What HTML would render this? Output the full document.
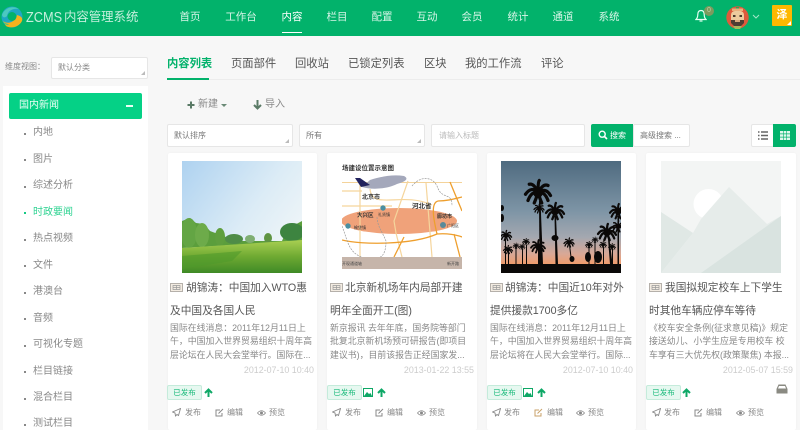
<!DOCTYPE html>
<html lang="zh"><head><meta charset="utf-8"><title>ZCMS</title>
<style>
html,body{margin:0;padding:0;width:800px;height:430px;overflow:hidden}
body{position:relative;background:#f7f7f7;font-family:"Liberation Sans","Noto Sans CJK SC",sans-serif;color:#555}
#w{position:absolute;left:0;top:0;width:800px;height:430px;overflow:hidden;filter:blur(.3px)}
.a{position:absolute;white-space:nowrap}
.hd{left:0;top:0;width:800px;height:36px;background:#02b26b}
.nav{top:9px;font-size:10.5px;line-height:16px;color:#d8f5e8;transform:translateX(-50%)}
.box{background:#fff;border:1px solid #e6e6e6;border-radius:2px;box-sizing:border-box}
.si{left:33px;font-size:10px;line-height:14px;color:#888;margin-top:1px}
.dot{left:24px;width:1.5px;height:1.5px;background:#888}
.tab{top:56px;font-size:11.3px;line-height:16px;color:#555}
.tri{width:0;height:0;border-left:4px solid transparent;border-bottom:4px solid #bbb}
.card{top:153px;height:277px;background:#fff;border-radius:2px;box-shadow:0 0 2px rgba(0,0,0,.04)}
.t{font-size:10.7px;line-height:14px;color:#555}
.d{font-size:8.9px;line-height:13.3px;color:#888;white-space:nowrap}
.dt{font-size:8.9px;line-height:12px;color:#ccc;text-align:right}
.tag{top:385px;width:35px;height:15px;box-sizing:border-box;background:#e6f8f0;border:1px solid #c5ebdb;border-radius:2px;color:#16b978;font-size:7.5px;line-height:13px;text-align:center}
.ac{top:407px;font-size:8px;line-height:12px;color:#888}
.sm{font-size:8px;line-height:12px}
svg{position:absolute;display:block}
</style></head><body><div id="w">

<div class="a hd"></div>
<svg style="left:1px;top:6px" width="22" height="22" viewBox="0 0 22 22"><circle cx="11" cy="11" r="10.5" fill="#1fa7c4"/><path d="M1 9C3 2 12-1 18 3 13 2 7 4 6 10 4 12 2 12 1 9Z" fill="#4cc9c0"/><path d="M2 15C7 19 14 16 16 9 20 10 22 12 21 15 18 21 10 23 5 20Z" fill="#f5b21d"/><circle cx="11" cy="10.5" r="4.5" fill="#02b26b"/><path d="M1 14C3 17 5 18 8 18 6 20 3 18 1 14Z" fill="#17c9a4"/></svg>
<div class="a" style="left:26px;top:8px;font-size:15px;line-height:20px;color:#c5efdd;transform:scaleX(.85);transform-origin:left">ZCMS</div>
<div class="a" style="left:64px;top:9px;font-size:12.4px;line-height:17px;color:#c5efdd">内容管理系统</div>

<div class="a nav" style="left:190px">首页</div>
<div class="a nav" style="left:241px">工作台</div>
<div class="a nav" style="left:292px;color:#fff">内容</div>
<div class="a" style="left:282px;top:32px;width:20px;height:1px;background:#fff"></div>
<div class="a nav" style="left:337px">栏目</div>
<div class="a nav" style="left:382px">配置</div>
<div class="a nav" style="left:427px">互动</div>
<div class="a nav" style="left:472px">会员</div>
<div class="a nav" style="left:518px">统计</div>
<div class="a nav" style="left:563px">通道</div>
<div class="a nav" style="left:609px">系统</div>

<svg style="left:695px;top:9px" width="12" height="14" viewBox="0 0 12 14"><path d="M6 1.500C3.500 1.500 2.800 3.500 2.800 5.500 2.800 8 2 9.500 1 10.500H11C10 9.500 9.200 8 9.200 5.500 9.200 3.500 8.500 1.500 6 1.500Z" fill="none" stroke="#e3fff2" stroke-width="1.200"/><path d="M4.500 12H7.500" stroke="#e3fff2" stroke-width="1.200"/></svg>
<div class="a" style="left:704px;top:6px;width:10px;height:10px;border-radius:5px;background:#7d9a5e;color:#bcd1a5;font-size:7px;line-height:10px;text-align:center">0</div>
<svg style="left:726px;top:6px" width="23" height="23" viewBox="0 0 23 23"><circle cx="11.500" cy="11.500" r="11.200" fill="#dd5a3c"/><rect x="5" y="5" width="13" height="13" rx="4" fill="#eccb9d"/><rect x="10" y="1" width="3" height="3" fill="#3d9c52"/><rect x="6" y="2.500" width="11" height="2.500" fill="#e9b07c"/><rect x="7" y="9" width="2.500" height="2" fill="#4a3a2c"/><rect x="13.500" y="9" width="2.500" height="2" fill="#4a3a2c"/><path d="M5 14H18V17L15 20H8L5 17Z" fill="#4e3d33"/><rect x="9" y="14" width="5" height="2" fill="#d9a87d"/><path d="M7 20H16L14 23H9Z" fill="#a8b85c"/></svg>
<svg style="left:752px;top:14px" width="8" height="6" viewBox="0 0 8 6"><path d="M1 1L4 4 7 1" fill="none" stroke="#a5e6c9" stroke-width="1"/></svg>
<div class="a" style="left:772px;top:5px;width:20px;height:21px;background:#ffb800;color:#fff;font-size:11px;line-height:21px;text-align:center;font-weight:bold;border-radius:1px">泽</div>
<div class="a" style="left:787px;top:21px;width:0;height:0;border-left:4px solid transparent;border-bottom:4px solid #fff"></div>

<div class="a sm" style="left:5px;top:61px;color:#888">维度视图：</div>
<div class="a box" style="left:51px;top:57px;width:97px;height:22px"></div>
<div class="a sm" style="left:58px;top:62px;color:#888">默认分类</div>
<div class="a tri" style="left:141px;top:71px"></div>

<div class="a" style="left:3px;top:86px;width:145px;height:344px;background:#fff"></div>
<div class="a" style="left:9px;top:93px;width:133px;height:26px;background:#05d186;border-radius:2px"></div>
<div class="a" style="left:19px;top:99px;font-size:10px;line-height:14px;color:#eafff5">国内新闻</div>
<div class="a" style="left:126px;top:105px;width:7px;height:2px;background:#eafff5"></div>

<div class="a dot" style="top:133px"></div><div class="a si" style="top:125px">内地</div>
<div class="a dot" style="top:159px"></div><div class="a si" style="top:152px">图片</div>
<div class="a dot" style="top:186px"></div><div class="a si" style="top:178px">综述分析</div>
<div class="a dot" style="top:212px;background:#16c985"></div><div class="a si" style="top:205px;color:#2fd392">时政要闻</div>
<div class="a dot" style="top:239px"></div><div class="a si" style="top:231px">热点视频</div>
<div class="a dot" style="top:265px"></div><div class="a si" style="top:258px">文件</div>
<div class="a dot" style="top:292px"></div><div class="a si" style="top:284px">港澳台</div>
<div class="a dot" style="top:318px"></div><div class="a si" style="top:311px">音频</div>
<div class="a dot" style="top:345px"></div><div class="a si" style="top:337px">可视化专题</div>
<div class="a dot" style="top:371px"></div><div class="a si" style="top:364px">栏目链接</div>
<div class="a dot" style="top:398px"></div><div class="a si" style="top:390px">混合栏目</div>
<div class="a dot" style="top:424px"></div><div class="a si" style="top:416px">测试栏目</div>

<div class="a" style="left:167px;top:79px;width:633px;height:1px;background:#ececec"></div>
<div class="a" style="left:167px;top:78px;width:42px;height:2px;background:#02b26b"></div>
<div class="a tab" style="left:167px;color:#02b26b;font-weight:bold">内容列表</div>
<div class="a tab" style="left:231px">页面部件</div>
<div class="a tab" style="left:295px">回收站</div>
<div class="a tab" style="left:348px">已锁定列表</div>
<div class="a tab" style="left:424px">区块</div>
<div class="a tab" style="left:465px">我的工作流</div>
<div class="a tab" style="left:541px">评论</div>

<svg style="left:187px;top:101px" width="8" height="8" viewBox="0 0 8 8"><path d="M4 .5V7.500M.5 4H7.500" stroke="#5a7a66" stroke-width="2"/></svg>
<div class="a" style="left:198px;top:98px;font-size:10px;line-height:14px;color:#888">新建</div>
<div class="a" style="left:221px;top:104px;width:0;height:0;border-left:3px solid transparent;border-right:3px solid transparent;border-top:3px solid #6a8a76"></div>
<svg style="left:253px;top:100px" width="9" height="10" viewBox="0 0 9 10"><path d="M4.500 0V8M1 5L4.500 8.500 8 5" fill="none" stroke="#5a7a66" stroke-width="2"/></svg>
<div class="a" style="left:265px;top:98px;font-size:10px;line-height:14px;color:#888">导入</div>

<div class="a box" style="left:167px;top:124px;width:126px;height:23px"></div>
<div class="a sm" style="left:174px;top:130px;color:#777">默认排序</div>
<div class="a tri" style="left:285px;top:139px"></div>
<div class="a box" style="left:299px;top:124px;width:126px;height:23px"></div>
<div class="a sm" style="left:306px;top:130px;color:#777">所有</div>
<div class="a tri" style="left:417px;top:139px"></div>
<div class="a box" style="left:431px;top:124px;width:154px;height:23px"></div>
<div class="a sm" style="left:439px;top:130px;color:#bbb">请输入标题</div>
<div class="a" style="left:591px;top:124px;width:42px;height:23px;background:#02b26b;border-radius:2px 0 0 2px"></div>
<svg style="left:598px;top:130px" width="10" height="10" viewBox="0 0 10 10"><circle cx="4.200" cy="4.200" r="3" fill="none" stroke="#fff" stroke-width="1.400"/><path d="M6.500 6.500L9 9" stroke="#fff" stroke-width="1.600"/></svg>
<div class="a sm" style="left:610px;top:130px;color:#fff">搜索</div>
<div class="a box" style="left:633px;top:124px;width:57px;height:23px"></div>
<div class="a sm" style="left:640px;top:130px;color:#777">高级搜索 ...</div>
<div class="a box" style="left:751px;top:124px;width:23px;height:23px"></div>
<svg style="left:758px;top:131px" width="10" height="9" viewBox="0 0 10 9"><path d="M0 1H1.500M3 1H10M0 4.500H1.500M3 4.500H10M0 8H1.500M3 8H10" stroke="#666" stroke-width="1.400"/></svg>
<div class="a" style="left:773px;top:124px;width:23px;height:23px;background:#02b26b;border-radius:0 2px 2px 0"></div>
<svg style="left:780px;top:131px" width="10" height="9" viewBox="0 0 10 9"><path d="M0 0H10V2.500H0ZM0 3.300H10V5.700H0ZM0 6.500H10V9H0Z" fill="#dff7ec"/><path d="M3.300 0V9M6.700 0V9" stroke="#02b26b" stroke-width=".6"/></svg>

<!-- cards -->
<div class="a card" style="left:168px;width:149px"></div>
<div class="a card" style="left:327px;width:150px"></div>
<div class="a card" style="left:487px;width:149px"></div>
<div class="a card" style="left:646px;width:150px"></div>

<!-- image 1 -->
<svg style="left:182px;top:161px" width="120" height="112" viewBox="0 0 120 112">
<defs><linearGradient id="s1" x1="0" y1="0" x2="1" y2=".7"><stop offset="0" stop-color="#aed2f0"/><stop offset=".6" stop-color="#dcecf6"/><stop offset="1" stop-color="#f1f6f8"/></linearGradient>
<linearGradient id="g1" x1="0" y1="0" x2="0" y2="1"><stop offset="0" stop-color="#a9cf52"/><stop offset=".5" stop-color="#6faa32"/><stop offset="1" stop-color="#3f8a26"/></linearGradient></defs>
<rect width="120" height="112" fill="url(#s1)"/>
<path d="M0 87V60L8 57 14 62 22 63 28 70 36 73 44 76 50 80H60L76 80H100L105 68 120 60V80Z" fill="#5b9e3c"/>
<ellipse cx="7" cy="72" rx="8" ry="15" fill="#63a544"/><ellipse cx="20" cy="74" rx="7" ry="12" fill="#6dab4a"/><ellipse cx="38" cy="76" rx="5" ry="9" fill="#5f9f3e"/><ellipse cx="52" cy="78" rx="9" ry="5" fill="#4f8c47"/><ellipse cx="68" cy="78" rx="5" ry="4" fill="#7fae72"/><ellipse cx="86" cy="77" rx="4" ry="5" fill="#5f9442"/><ellipse cx="110" cy="71" rx="12" ry="9" fill="#3d8440"/>
<path d="M0 87L120 79V112H0Z" fill="url(#g1)"/><path d="M0 95L60 90 50 100 0 108Z" fill="#4f9a2b" opacity=".6"/>
</svg>

<!-- image 2 -->
<svg style="left:342px;top:161px" width="120" height="112" viewBox="0 0 120 112">
<rect width="120" height="112" fill="#fff"/>
<ellipse cx="57" cy="60" rx="58" ry="13" fill="#f0a27a"/>
<rect x="0" y="21" width="120" height="1" fill="#f4d39a"/>
<path d="M18 22V96M84 22L90 96M0 45H50M66 20L52 60 54 72 60 96M28 28C30 50 60 30 90 44M0 30H20" fill="none" stroke="#f5d59c" stroke-width="1.200"/>
<path d="M0 79C20 84 70 84 95 73 105 72 115 74 120 76M52 96L62 76M96 40C88 42 92 60 95 73M96 40C105 40 112 38 120 36M108 21L120 50M112 73L118 96" fill="none" stroke="#ee9f2e" stroke-width="1.300"/>
<path d="M0 65C6 80 6 92 22 97 38 100 44 96 44 80 40 70 35 65 35 55M70 25C78 15 90 15 95 25 100 40 110 30 110 45" fill="none" stroke="#999" stroke-width=".7" stroke-dasharray="2 1"/>
<circle cx="41" cy="47" r="2.700" fill="#4b8fa0"/><circle cx="6" cy="65" r="2.700" fill="#4b8fa0"/><circle cx="101" cy="64" r="3" fill="#5a8a9a"/>
<g transform="translate(0,13)"><path d="M20 13C30 16 45 15 55 10 66 7 66 4 62 2 50 0 38 3 28 6Z" fill="#a4a8bb"/><path d="M13 4L19 13 28 11 18 4Z" fill="#22235e"/></g>
<rect x="0" y="96" width="120" height="12" fill="#c6b5aa"/>
<text x="0" y="9" font-size="6.500" font-weight="bold" fill="#333">场建设位置示意图</text>
<text x="20" y="38" font-size="6" font-weight="bold" fill="#333">北京市</text>
<text x="70" y="47" font-size="6.500" font-weight="bold" fill="#333">河北省</text>
<text x="15" y="56" font-size="5.500" font-weight="bold" fill="#333">大兴区</text>
<text x="36" y="55" font-size="4" fill="#333">礼贤镇</text>
<text x="12" y="68" font-size="4" fill="#333">榆垡镇</text>
<text x="95" y="57" font-size="5" font-weight="bold" fill="#333">廊坊市</text>
<text x="105" y="66" font-size="4" fill="#333">广阳区</text>
<text x="0" y="104" font-size="4" fill="#444">开现通道轴</text><text x="105" y="104" font-size="4" fill="#444">新开路</text>
</svg>

<!-- image 3 -->
<svg style="left:501px;top:161px" width="120" height="112" viewBox="0 0 120 112">
<defs><linearGradient id="s3" x1="0" y1="0" x2="0" y2="1"><stop offset="0" stop-color="#4f6b80"/><stop offset=".45" stop-color="#7e95a6"/><stop offset=".68" stop-color="#a4a8b0"/><stop offset=".83" stop-color="#d9a896"/><stop offset=".92" stop-color="#ef9c6d"/></linearGradient>
<g id="p" fill="none" stroke="#0b0908" stroke-width="2.600" stroke-linecap="round"><path d="M0 0Q-5-6-10 1M0 0Q-3-8-7-7M0 0Q0-9 1-10M0 0Q4-8 8-6M0 0Q6-5 10 2M0 0Q-5-2-8 6M0 0Q5-2 8 6M0 0Q-1 3-3 8M0 0Q1 3 3 8"/><circle r="2.500" fill="#0b0908"/></g></defs>
<rect width="120" height="112" fill="url(#s3)"/>
<g fill="#0b0908"><rect x="0" y="103" width="120" height="9"/>
<path d="M38 40H39.500L42 103H38.500Z"/><path d="M53.500 55H55L57 103H54.500Z"/><rect x="37" y="88" width="2" height="15"/><path d="M107 78H108.500L111.500 103H109Z"/><path d="M68 84H69L71 100H70Z"/><rect x="116.500" y="55" width="1.500" height="48"/>
<rect x="4" y="78" width="1" height="25"/><rect x="7" y="91" width="1" height="12"/><rect x="14.500" y="86" width="1" height="17"/><rect x="21" y="88" width="1" height="15"/><rect x="25" y="84" width="1" height="19"/><rect x="93.500" y="81" width="1" height="22"/><rect x="87.500" y="86" width="1" height="17"/><rect x="102" y="86" width="1" height="17"/><rect x="111" y="88" width="1" height="15"/>
<ellipse cx="97" cy="96" rx="4" ry="6"/><ellipse cx="87" cy="96" rx="3" ry="5"/><ellipse cx="71" cy="98" rx="2.500" ry="3"/><ellipse cx="54" cy="77" rx="3.500" ry="3"/><ellipse cx="1" cy="47" rx="2" ry="3"/><ellipse cx="1" cy="57" rx="2" ry="4"/></g>
<use href="#p" transform="translate(37,32) scale(1.250)"/><use href="#p" transform="translate(38,48) scale(.5)"/>
<use href="#p" transform="translate(54,51) scale(.9)"/>
<use href="#p" transform="translate(37,86) scale(.7)"/>
<use href="#p" transform="translate(106,72) scale(.9)"/>
<use href="#p" transform="translate(117,51) scale(.8)"/><use href="#p" transform="translate(117,66) scale(.6)"/>
<use href="#p" transform="translate(68,82) scale(.5)"/>
<use href="#p" transform="translate(94,79) scale(.3)"/><use href="#p" transform="translate(88,84) scale(.35)"/><use href="#p" transform="translate(102,84) scale(.35)"/><use href="#p" transform="translate(111,86) scale(.35)"/>
<use href="#p" transform="translate(5,75) scale(.55)"/><use href="#p" transform="translate(7,89) scale(.45)"/><use href="#p" transform="translate(15,85) scale(.3)"/><use href="#p" transform="translate(21,86) scale(.3)"/><use href="#p" transform="translate(25,81) scale(.35)"/>
</svg>

<!-- image 4 -->
<svg style="left:661px;top:161px" width="120" height="112" viewBox="0 0 120 112">
<rect width="120" height="112" fill="#f3f5f4"/>
<circle cx="47.500" cy="43" r="15" fill="#fff"/>
<path d="M0 51L32 72 0 112Z" fill="#e0e8e5"/>
<path d="M68 26L106 63 120 55V112H0L32 72 40 58Z" fill="#e6ecea"/>
<path d="M40 112L120 55V112Z" fill="#d9e3e0"/>
</svg>

<!-- card 1 text -->
<svg style="left:170px;top:283px" width="13" height="9" viewBox="0 0 13 9"><rect x=".5" y=".5" width="12" height="8" fill="#f3ece2" stroke="#b5b0aa"/><path d="M3 2.500H10V6.500H3ZM6.500 2.500V6.500M3 4.500H10" fill="none" stroke="#999" stroke-width=".7"/></svg>
<div class="a t" style="left:186px;top:281px">胡锦涛：中国加入WTO惠</div>
<div class="a t" style="left:170px;top:304px">及中国及各国人民</div>
<div class="a d" style="left:170px;top:322px">国际在线消息：2011年12月11日上<br>午，中国加入世界贸易组织十周年高<br>层论坛在人民大会堂举行。国际在...</div>
<div class="a dt" style="left:214px;width:100px;top:364px">2012-07-10 10:40</div>
<div class="a tag" style="left:167px">已发布</div>
<svg style="left:204px;top:388px" width="9" height="9" viewBox="0 0 9 9"><path d="M4.500 9V2M1 5L4.500 1.500 8 5" fill="none" stroke="#0ea866" stroke-width="2"/></svg>
<svg style="left:172px;top:408px" width="9" height="9" viewBox="0 0 9 9"><path d="M8.500.5L.5 4 3 5 3.500 8 5 6.500 6.500 7.500Z" fill="none" stroke="#888" stroke-width=".9"/></svg><div class="a ac" style="left:185px">发布</div>
<svg style="left:215px;top:408px" width="9" height="9" viewBox="0 0 9 9"><path d="M7 5V8H1V2H5M3.500 5.500L8 1" fill="none" stroke="#888" stroke-width="1"/></svg><div class="a ac" style="left:227px">编辑</div>
<svg style="left:257px;top:410px" width="9" height="6" viewBox="0 0 9 6"><path d="M.5 3C3 0 6 0 8.500 3 6 6 3 6 .5 3Z" fill="none" stroke="#888" stroke-width=".8"/><circle cx="4.500" cy="3" r="1.500" fill="#888"/></svg><div class="a ac" style="left:269px">预览</div>

<!-- card 2 text -->
<svg style="left:330px;top:283px" width="13" height="9" viewBox="0 0 13 9"><rect x=".5" y=".5" width="12" height="8" fill="#f3ece2" stroke="#b5b0aa"/><path d="M3 2.500H10V6.500H3ZM6.500 2.500V6.500M3 4.500H10" fill="none" stroke="#999" stroke-width=".7"/></svg>
<div class="a t" style="left:345px;top:281px">北京新机场年内局部开建</div>
<div class="a t" style="left:330px;top:304px">明年全面开工(图)</div>
<div class="a d" style="left:330px;top:322px">新京报讯 去年年底，国务院等部门<br>批复北京新机场预可研报告(即项目<br>建议书)，目前该报告正经国家发...</div>
<div class="a dt" style="left:374px;width:100px;top:364px">2013-01-22 13:55</div>
<div class="a tag" style="left:327px">已发布</div>
<svg style="left:363px;top:388px" width="10" height="9" viewBox="0 0 10 9"><rect x=".5" y=".5" width="9" height="8" fill="none" stroke="#0ea866"/><path d="M1 8L4 4 6 6 7.500 5 9 8Z" fill="#0ea866"/></svg>
<svg style="left:377px;top:388px" width="9" height="9" viewBox="0 0 9 9"><path d="M4.500 9V2M1 5L4.500 1.500 8 5" fill="none" stroke="#0ea866" stroke-width="2"/></svg>
<svg style="left:332px;top:408px" width="9" height="9" viewBox="0 0 9 9"><path d="M8.500.5L.5 4 3 5 3.500 8 5 6.500 6.500 7.500Z" fill="none" stroke="#888" stroke-width=".9"/></svg><div class="a ac" style="left:345px">发布</div>
<svg style="left:375px;top:408px" width="9" height="9" viewBox="0 0 9 9"><path d="M7 5V8H1V2H5M3.500 5.500L8 1" fill="none" stroke="#888" stroke-width="1"/></svg><div class="a ac" style="left:387px">编辑</div>
<svg style="left:417px;top:410px" width="9" height="6" viewBox="0 0 9 6"><path d="M.5 3C3 0 6 0 8.500 3 6 6 3 6 .5 3Z" fill="none" stroke="#888" stroke-width=".8"/><circle cx="4.500" cy="3" r="1.500" fill="#888"/></svg><div class="a ac" style="left:429px">预览</div>

<!-- card 3 text -->
<svg style="left:490px;top:283px" width="13" height="9" viewBox="0 0 13 9"><rect x=".5" y=".5" width="12" height="8" fill="#f3ece2" stroke="#b5b0aa"/><path d="M3 2.500H10V6.500H3ZM6.500 2.500V6.500M3 4.500H10" fill="none" stroke="#999" stroke-width=".7"/></svg>
<div class="a t" style="left:505px;top:281px">胡锦涛：中国近10年对外</div>
<div class="a t" style="left:490px;top:304px">提供援款1700多亿</div>
<div class="a d" style="left:490px;top:322px">国际在线消息：2011年12月11日上<br>午，中国加入世界贸易组织十周年高<br>层论坛将在人民大会堂举行。国际...</div>
<div class="a dt" style="left:533px;width:100px;top:364px">2012-07-10 10:40</div>
<div class="a tag" style="left:487px">已发布</div>
<svg style="left:523px;top:388px" width="10" height="9" viewBox="0 0 10 9"><rect x=".5" y=".5" width="9" height="8" fill="none" stroke="#0ea866"/><path d="M1 8L4 4 6 6 7.500 5 9 8Z" fill="#0ea866"/></svg>
<svg style="left:537px;top:388px" width="9" height="9" viewBox="0 0 9 9"><path d="M4.500 9V2M1 5L4.500 1.500 8 5" fill="none" stroke="#0ea866" stroke-width="2"/></svg>
<svg style="left:492px;top:408px" width="9" height="9" viewBox="0 0 9 9"><path d="M8.500.5L.5 4 3 5 3.500 8 5 6.500 6.500 7.500Z" fill="none" stroke="#888" stroke-width=".9"/></svg><div class="a ac" style="left:504px">发布</div>
<svg style="left:534px;top:408px" width="9" height="9" viewBox="0 0 9 9"><path d="M7 5V8H1V2H5M3.500 5.500L8 1" fill="none" stroke="#c9a26a" stroke-width="1"/></svg><div class="a ac" style="left:547px">编辑</div>
<svg style="left:576px;top:410px" width="9" height="6" viewBox="0 0 9 6"><path d="M.5 3C3 0 6 0 8.500 3 6 6 3 6 .5 3Z" fill="none" stroke="#888" stroke-width=".8"/><circle cx="4.500" cy="3" r="1.500" fill="#888"/></svg><div class="a ac" style="left:588px">预览</div>

<!-- card 4 text -->
<svg style="left:649px;top:283px" width="13" height="9" viewBox="0 0 13 9"><rect x=".5" y=".5" width="12" height="8" fill="#f3ece2" stroke="#b5b0aa"/><path d="M3 2.500H10V6.500H3ZM6.500 2.500V6.500M3 4.500H10" fill="none" stroke="#999" stroke-width=".7"/></svg>
<div class="a t" style="left:665px;top:281px">我国拟规定校车上下学生</div>
<div class="a t" style="left:649px;top:304px">时其他车辆应停车等待</div>
<div class="a d" style="left:649px;top:322px">《校车安全条例(征求意见稿)》规定<br>接送幼儿、小学生应是专用校车 校<br>车享有三大优先权(政策聚焦) 本报...</div>
<div class="a dt" style="left:693px;width:100px;top:364px">2012-05-07 15:59</div>
<div class="a tag" style="left:646px">已发布</div>
<svg style="left:682px;top:388px" width="9" height="9" viewBox="0 0 9 9"><path d="M4.500 9V2M1 5L4.500 1.500 8 5" fill="none" stroke="#0ea866" stroke-width="2"/></svg>
<svg style="left:776px;top:384px" width="12" height="10" viewBox="0 0 12 10"><path d="M2.500.5H9.500L11.500 5V9.500H.5V5Z" fill="#8a8a82"/><path d="M3 2H9L10 4.500H2Z" fill="#fff"/></svg>
<svg style="left:652px;top:408px" width="9" height="9" viewBox="0 0 9 9"><path d="M8.500.5L.5 4 3 5 3.500 8 5 6.500 6.500 7.500Z" fill="none" stroke="#888" stroke-width=".9"/></svg><div class="a ac" style="left:664px">发布</div>
<svg style="left:694px;top:408px" width="9" height="9" viewBox="0 0 9 9"><path d="M7 5V8H1V2H5M3.500 5.500L8 1" fill="none" stroke="#888" stroke-width="1"/></svg><div class="a ac" style="left:706px">编辑</div>
<svg style="left:736px;top:410px" width="9" height="6" viewBox="0 0 9 6"><path d="M.5 3C3 0 6 0 8.500 3 6 6 3 6 .5 3Z" fill="none" stroke="#888" stroke-width=".8"/><circle cx="4.500" cy="3" r="1.500" fill="#888"/></svg><div class="a ac" style="left:748px">预览</div>

</div></body></html>
